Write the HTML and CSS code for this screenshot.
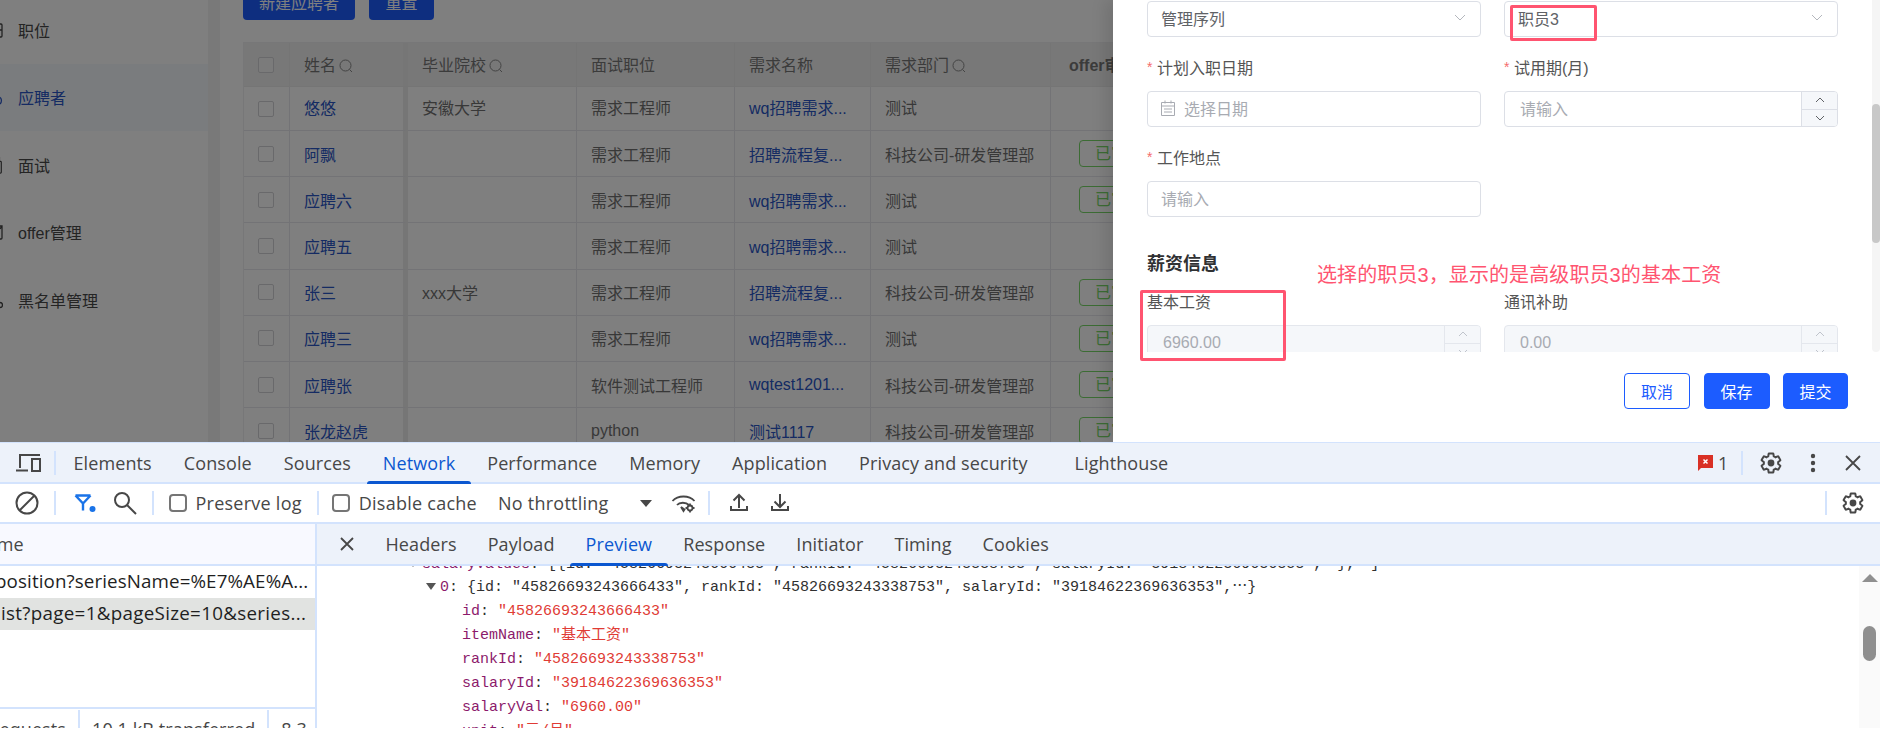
FILE: index.html
```html
<!DOCTYPE html>
<html lang="zh-CN">
<head>
<meta charset="utf-8">
<title>应聘者</title>
<link rel="stylesheet" href="styles.css">
</head>
<body>
<div class="page">
  <div class="app">
    <nav class="sidebar">
      <div class="nav-item"><svg class="nav-ico" viewBox="0 0 16 16"><path d="M8 2h6a1 1 0 0 1 1 1v11a1 1 0 0 1-1 1H8M8 8h7"/></svg>职位</div>
      <div class="nav-item active"><svg class="nav-ico" viewBox="0 0 16 16"><path d="M12 8c3 1 3 5 1 7"/></svg>应聘者</div>
      <div class="nav-item"><svg class="nav-ico" viewBox="0 0 16 20"><path d="M11 6h3a1 1 0 0 1 1 1v11a1 1 0 0 1-1 1H8M13 6V1"/></svg>面试</div>
      <div class="nav-item"><svg class="nav-ico" viewBox="0 0 16 16"><path d="M8 2h7v12a1 1 0 0 1-1 1H8M13 5l2-3"/></svg>offer管理</div>
      <div class="nav-item"><svg class="nav-ico" viewBox="0 0 16 16"><circle cx="13" cy="13" r="2.5"/></svg>黑名单管理</div>
    </nav>
    <div class="gutter"></div>
    <main class="main">
      <div class="actions">
        <button class="btn-top btn-wide">新建应聘者</button>
        <button class="btn-top">重置</button>
      </div>
      <table class="grid">
        <colgroup><col class="c-check"><col class="c-name"><col class="c-school"><col class="c-pos"><col class="c-need"><col class="c-dept"><col class="c-offer"></colgroup>
        <thead>
          <tr>
            <th><span class="cb"></span></th>
            <th class="fixed">姓名<svg class="sico" viewBox="0 0 14 14"><circle cx="6.5" cy="6.5" r="5.5"/><path d="M10.5 10.5l2.5 2.5"/></svg></th>
            <th>毕业院校<svg class="sico" viewBox="0 0 14 14"><circle cx="6.5" cy="6.5" r="5.5"/><path d="M10.5 10.5l2.5 2.5"/></svg></th>
            <th>面试职位</th>
            <th>需求名称</th>
            <th>需求部门<svg class="sico" viewBox="0 0 14 14"><circle cx="6.5" cy="6.5" r="5.5"/><path d="M10.5 10.5l2.5 2.5"/></svg></th>
            <th class="offer-h">offer审批状态</th>
          </tr>
        </thead>
        <tbody>
          <tr class="first"><td><span class="cb"></span></td><td class="fixed link">悠悠</td><td>安徽大学</td><td>需求工程师</td><td class="link">wq招聘需求...</td><td>测试</td><td></td></tr>
          <tr><td><span class="cb"></span></td><td class="fixed link">阿飘</td><td></td><td>需求工程师</td><td class="link">招聘流程复...</td><td>科技公司-研发管理部</td><td><span class="tag">已审批</span></td></tr>
          <tr><td><span class="cb"></span></td><td class="fixed link">应聘六</td><td></td><td>需求工程师</td><td class="link">wq招聘需求...</td><td>测试</td><td><span class="tag">已审批</span></td></tr>
          <tr><td><span class="cb"></span></td><td class="fixed link">应聘五</td><td></td><td>需求工程师</td><td class="link">wq招聘需求...</td><td>测试</td><td></td></tr>
          <tr><td><span class="cb"></span></td><td class="fixed link">张三</td><td>xxx大学</td><td>需求工程师</td><td class="link">招聘流程复...</td><td>科技公司-研发管理部</td><td><span class="tag">已审批</span></td></tr>
          <tr><td><span class="cb"></span></td><td class="fixed link">应聘三</td><td></td><td>需求工程师</td><td class="link">wq招聘需求...</td><td>测试</td><td><span class="tag">已审批</span></td></tr>
          <tr><td><span class="cb"></span></td><td class="fixed link">应聘张</td><td></td><td>软件测试工程师</td><td class="link">wqtest1201...</td><td>科技公司-研发管理部</td><td><span class="tag">已审批</span></td></tr>
          <tr><td><span class="cb"></span></td><td class="fixed link">张龙赵虎</td><td></td><td>python</td><td class="link">测试1117</td><td>科技公司-研发管理部</td><td><span class="tag">已审批</span></td></tr>
        </tbody>
      </table>
    </main>
  </div>
  <div class="mask"></div>
  <aside class="drawer">
    <div class="drawer-body">
      <div class="form-grid">
        <div class="field">
          <div class="input"><span class="val">管理序列</span><svg class="chev" viewBox="0 0 12 8"><path d="M1 1l5 5 5-5"/></svg></div>
        </div>
        <div class="field">
          <div class="input"><span class="val">职员3</span><svg class="chev" viewBox="0 0 12 8"><path d="M1 1l5 5 5-5"/></svg></div>
        </div>
        <div class="field">
          <div class="label"><i class="req">*</i>计划入职日期</div>
          <div class="input"><svg class="cal" viewBox="0 0 14 16"><path d="M.5 2.5h13v13H.5zM.5 6h13M4 .5v3M10 .5v3M3 9h8M3 12h8"/></svg><span class="ph">选择日期</span></div>
        </div>
        <div class="field">
          <div class="label"><i class="req">*</i>试用期(月)</div>
          <div class="input with-step"><span class="ph">请输入</span>
            <div class="stepper"><span class="step"><svg viewBox="0 0 10 6"><path d="M1 5l4-4 4 4"/></svg></span><span class="step"><svg viewBox="0 0 10 6"><path d="M1 1l4 4 4-4"/></svg></span></div>
          </div>
        </div>
        <div class="field">
          <div class="label"><i class="req">*</i>工作地点</div>
          <div class="input"><span class="ph">请输入</span></div>
        </div>
      </div>
      <h3 class="section">薪资信息</h3>
      <div class="form-grid">
        <div class="field">
          <div class="label">基本工资</div>
          <div class="input with-step disabled"><span class="num">6960.00</span>
            <div class="stepper"><span class="step"><svg viewBox="0 0 10 6"><path d="M1 5l4-4 4 4"/></svg></span><span class="step"><svg viewBox="0 0 10 6"><path d="M1 1l4 4 4-4"/></svg></span></div>
          </div>
        </div>
        <div class="field">
          <div class="label">通讯补助</div>
          <div class="input with-step disabled"><span class="num">0.00</span>
            <div class="stepper"><span class="step"><svg viewBox="0 0 10 6"><path d="M1 5l4-4 4 4"/></svg></span><span class="step"><svg viewBox="0 0 10 6"><path d="M1 1l4 4 4-4"/></svg></span></div>
          </div>
        </div>
      </div>
      <div class="d-scroll"><div class="d-thumb"></div></div>
    </div>
    <div class="drawer-foot">
      <button class="btn ghost">取消</button>
      <button class="btn primary">保存</button>
      <button class="btn primary last">提交</button>
    </div>
  </aside>
  <div class="mark mark-rank"></div>
  <div class="mark mark-salary"></div>
  <div class="note">选择的职员3，显示的是高级职员3的基本工资</div>
</div>

<section class="devtools">
  <div class="dt-tabs">
    <svg class="dt-device" viewBox="0 0 26 18"><path d="M5 14V1h20M1 16.500h12"/><rect x="17" y="5" width="8" height="12"/></svg>
    <span class="dt-sep sep-a"></span>
    <div class="tab-list">
      <span class="tab">Elements</span>
      <span class="tab">Console</span>
      <span class="tab">Sources</span>
      <span class="tab on">Network</span>
      <span class="tab">Performance</span>
      <span class="tab">Memory</span>
      <span class="tab">Application</span>
      <span class="tab">Privacy and security</span>
      <span class="tab tab-last">Lighthouse</span>
    </div>
    <div class="dt-right">
      <svg class="err" viewBox="0 0 15 16"><path d="M0 0h15v13H3l-3 3z"/><path class="err-x" d="M5.500 4.500l4 4M9.500 4.500l-4 4"/></svg>
      <span class="err-n">1</span>
      <span class="dt-sep sep-b"></span>
      <svg class="gear gear-a" viewBox="0 0 24 24"><path d="M19.140 12.940c.04-.3.06-.61.06-.94 0-.32-.02-.64-.07-.94l2.030-1.580a.49.49 0 0 0 .12-.61l-1.920-3.320a.488.488 0 0 0-.59-.22l-2.390.96c-.5-.38-1.030-.7-1.620-.94l-.36-2.540a.484.484 0 0 0-.48-.41h-3.840c-.24 0-.43.17-.47.41l-.36 2.540c-.59.24-1.130.57-1.620.94l-2.390-.96c-.22-.08-.47 0-.59.22L2.740 8.870c-.12.21-.08.47.12.61l2.030 1.580c-.05.3-.09.63-.09.94s.02.64.07.94l-2.030 1.580a.49.49 0 0 0-.12.61l1.920 3.320c.12.22.37.29.59.22l2.390-.96c.5.38 1.030.7 1.620.94l.36 2.540c.05.24.24.41.48.41h3.840c.24 0 .44-.17.47-.41l.36-2.540c.59-.24 1.130-.56 1.620-.94l2.390.96c.22.08.47 0 .59-.22l1.920-3.320c.12-.22.07-.47-.12-.61l-2.010-1.580z"/><circle class="gear-dot" cx="12" cy="12" r="3.400"/></svg>
      <svg class="dots" viewBox="0 0 6 20"><circle cx="3" cy="3" r="2.200"/><circle cx="3" cy="10" r="2.200"/><circle cx="3" cy="17" r="2.200"/></svg>
      <svg class="close" viewBox="0 0 16 16"><path d="M1 1l14 14M15 1L1 15"/></svg>
    </div>
  </div>

  <div class="dt-bar">
    <svg class="i-block" viewBox="0 0 24 24"><circle cx="12" cy="12" r="10.500"/><path d="M19.500 4.500l-15 15"/></svg>
    <span class="dt-sep sep-c"></span>
    <svg class="i-filter" viewBox="0 0 22 18"><path d="M1.500 1.500h15M1.500 1.500l7.500 8v7M16.500 1.500l-7.500 8"/><circle class="dot" cx="18.500" cy="15" r="3"/></svg>
    <svg class="i-search" viewBox="0 0 24 24"><circle cx="9" cy="9" r="7"/><path d="M14 14l9 9"/></svg>
    <span class="dt-sep sep-d"></span>
    <label class="chk chk-a"><span class="box"></span>Preserve log</label>
    <span class="dt-sep sep-e"></span>
    <label class="chk chk-b"><span class="box"></span>Disable cache</label>
    <span class="throttle">No throttling</span>
    <svg class="caret" viewBox="0 0 12 7"><path d="M0 0h12L6 7z"/></svg>
    <svg class="i-wifi" viewBox="0 0 25 19"><path d="M1.500 7C7 1 18 1 23.500 7M6 11c2.500-3 9-3 12 0"/><path class="fill" d="M10 13l2.500 4 1-1.500z"/><circle cx="19" cy="14" r="2.500"/><path d="M19 9.500v2M19 16.500v2M14.500 14h2M21.500 14h2"/></svg>
    <span class="dt-sep sep-f"></span>
    <svg class="i-up" viewBox="0 0 18 20"><path d="M1 13v4h16v-4M9 15V2M3.500 7.500L9 2l5.500 5.500"/></svg>
    <svg class="i-down" viewBox="0 0 18 20"><path d="M1 13v4h16v-4M9 1v13M3.500 8.500L9 14l5.500-5.500"/></svg>
    <div class="bar-right">
      <span class="dt-sep"></span>
      <svg class="gear gear-b" viewBox="0 0 24 24"><path d="M19.140 12.940c.04-.3.06-.61.06-.94 0-.32-.02-.64-.07-.94l2.030-1.580a.49.49 0 0 0 .12-.61l-1.920-3.320a.488.488 0 0 0-.59-.22l-2.390.96c-.5-.38-1.030-.7-1.620-.94l-.36-2.540a.484.484 0 0 0-.48-.41h-3.840c-.24 0-.43.17-.47.41l-.36 2.540c-.59.24-1.130.57-1.620.94l-2.390-.96c-.22-.08-.47 0-.59.22L2.740 8.870c-.12.21-.08.47.12.61l2.030 1.580c-.05.3-.09.63-.09.94s.02.64.07.94l-2.030 1.580a.49.49 0 0 0-.12.61l1.920 3.320c.12.22.37.29.59.22l2.390-.96c.5.38 1.030.7 1.620.94l.36 2.540c.05.24.24.41.48.41h3.840c.24 0 .44-.17.47-.41l.36-2.540c.59-.24 1.130-.56 1.620-.94l2.390.96c.22.08.47 0 .59-.22l1.920-3.320c.12-.22.07-.47-.12-.61l-2.010-1.580z"/><circle class="gear-dot" cx="12" cy="12" r="3.400"/></svg>
    </div>
  </div>

  <div class="dt-split">
    <div class="req-pane">
      <div class="req-head"><span class="req-name">Name</span></div>
      <div class="req-list">
        <div class="req-row"><span class="req-a">position?seriesName=%E7%AE%A...</span></div>
        <div class="req-row sel"><span class="req-b">list?page=1&amp;pageSize=10&amp;series...</span></div>
      </div>
      <div class="status">
        <span class="st st-a">requests</span>
        <span class="st-sep"></span>
        <span class="st st-b">10.1 kB transferred</span>
        <span class="st-sep"></span>
        <span class="st st-c">8.3</span>
      </div>
    </div>
    <div class="detail">
      <div class="det-tabs">
        <svg class="det-x" viewBox="0 0 14 14"><path d="M1 1l12 12M13 1L1 13"/></svg>
        <span class="dtab">Headers</span>
        <span class="dtab">Payload</span>
        <span class="dtab on">Preview</span>
        <span class="dtab">Response</span>
        <span class="dtab">Initiator</span>
        <span class="dtab">Timing</span>
        <span class="dtab">Cookies</span>
      </div>
      <div class="det-body">
        <div class="json">
          <div class="jl l0"><i class="tri"></i><span class="k">salaryValues</span>: [{id: "45826693243666433", rankId: "45826693243338753", salaryId: "39184622369636353",<span class="more">…</span>},<span class="more">…</span>]</div>
          <div class="jl l1"><i class="tri"></i><span class="k">0</span>: {id: "45826693243666433", rankId: "45826693243338753", salaryId: "39184622369636353",<span class="more">…</span>}</div>
          <div class="jl l2"><span class="k">id</span>: <span class="s">"45826693243666433"</span></div>
          <div class="jl l2"><span class="k">itemName</span>: <span class="s">"基本工资"</span></div>
          <div class="jl l2"><span class="k">rankId</span>: <span class="s">"45826693243338753"</span></div>
          <div class="jl l2"><span class="k">salaryId</span>: <span class="s">"39184622369636353"</span></div>
          <div class="jl l2"><span class="k">salaryVal</span>: <span class="s">"6960.00"</span></div>
          <div class="jl l2"><span class="k">unit</span>: <span class="s">"元/月"</span></div>
        </div>
        <div class="dt-scroll"><i class="up"></i><i class="thumb"></i></div>
      </div>
    </div>
  </div>
</section>
</body>
</html>
```

FILE: styles.css
```css
* { box-sizing: border-box; }
html, body { margin: 0; padding: 0; height: 729px; overflow: hidden; background: #fff; }
body { font-family: "Liberation Sans", "Noto Sans CJK SC", sans-serif; font-size: 16px; color: #333; }
svg { display: block; flex: none; fill: none; }

/* application */
.page { position: relative; height: 442px; overflow: hidden; }
.app { display: flex; height: 442px; }
.sidebar { width: 208px; flex: none; margin-top: -4px; overflow: hidden; background: #fff; }
.nav-item { height: 67.5px; display: flex; align-items: center; color: #484848; }
.nav-item.active { background: #f4f8fd; color: #2a56c6; }
.nav-ico { width: 16px; height: 18px; margin: 0 15px 0 -13px; stroke: #444; stroke-width: 1.3; }
.active .nav-ico { stroke: #2a56c6; }
.gutter { width: 12px; flex: none; background: #f3f3f3; }
.main { flex: 1; min-width: 0; padding-left: 23px; overflow: hidden; background: #fff; }
.actions { display: flex; gap: 14px; height: 36px; margin-top: -16px; }
.btn-top { height: 36px; width: 65px; border: 0; border-radius: 4px; padding: 0; background: #1c5cff; color: #fff; font: inherit; }
.btn-wide { width: 112px; }

.grid { margin-top: 22px; width: 935px; border-collapse: separate; border-spacing: 0; table-layout: fixed; border-top: 1px solid #eeeef0; border-left: 1px solid #eeeef0; }
.c-check { width: 46px; } .c-name { width: 118px; } .c-school { width: 169px; } .c-pos { width: 158px; }
.c-need { width: 136px; } .c-dept { width: 180px; } .c-offer { width: 128px; }
.grid th, .grid td { padding: 0 14px; text-align: left; white-space: nowrap; overflow: hidden; border-right: 1px solid #e6e6ec; border-bottom: 1px solid #e6e6ec; height: 46.2px; font-size: 16px; }
.grid th { height: 44px; padding-bottom: 2px; background: #f0f0f0; color: #777; font-weight: 400; border-color: #eaeaea; }
.grid th:first-child, .grid td:first-child { padding: 0 0 0 14px; }
.grid td { color: #717171; }
.grid .first td { height: 44px; padding-bottom: 3px; }
.grid .first td:first-child { padding-bottom: 0; }
.grid .fixed { border-right: 5px solid #ececec; }
.grid td.link { color: #2a56c6; }
.grid .offer-h { font-weight: 700; padding-left: 18px; overflow: visible; }
.cb { display: block; width: 16px; height: 16px; border: 1px solid #d2d2d6; border-radius: 2px; background: #fff; }
th .cb { background: #f6f6f6; }
.sico { display: inline-block; vertical-align: -2px; width: 14px; height: 14px; margin-left: 3px; stroke: #888; stroke-width: 1; }
.tag { display: inline-block; margin-left: 14px; padding: 0 15px; height: 27px; line-height: 25px; border: 1px solid #78d868; border-radius: 4px; color: #78d868; }

.mask { position: absolute; inset: 0; background: rgba(0, 0, 0, .5); }

/* drawer */
.drawer { position: absolute; top: 0; right: 0; bottom: 0; width: 767px; background: #fff; box-shadow: -8px 0 14px rgba(0, 0, 0, .1); }
.drawer-body { position: relative; height: 352px; padding: 1px 42px 0 34px; overflow: hidden; }
.form-grid { display: grid; grid-template-columns: 334px 334px; column-gap: 23px; row-gap: 20px; }
.field { min-width: 0; }
.label { height: 24px; line-height: 24px; margin-bottom: 10px; color: #555; white-space: nowrap; }
.req { display: inline-block; width: 10px; font-style: normal; font-size: 14px; color: #f56c6c; vertical-align: 2px; line-height: 14px; }
.input { display: flex; align-items: center; height: 36px; padding: 0 0 2px 13px; border: 1px solid #dcdfe6; border-radius: 4px; background: #fff; overflow: hidden; }
.with-step { padding-left: 15px; padding-bottom: 0; }
.with-step .ph { padding-bottom: 2px; }
.val { color: #606266; }
.ph { color: #a8abb2; }
.num { color: #a8abb2; }
.chev { width: 12px; height: 8px; margin-left: auto; margin-right: 14px; stroke: #b4b7bd; stroke-width: 1; }
.cal { width: 14px; height: 16px; margin-right: 9px; stroke: #a8abb2; stroke-width: 1; }
.stepper { display: flex; flex-direction: column; width: 36px; height: 100%; margin-left: auto; border-left: 1px solid #dcdfe6; background: #f5f7fa; }
.step { flex: 1; display: flex; align-items: center; justify-content: center; }
.step + .step { border-top: 1px solid #dcdfe6; }
.step svg { width: 10px; height: 6px; stroke: #606266; stroke-width: 1; }
.input.disabled { background: #f5f7fa; border-color: #e4e7ed; }
.disabled .step svg { stroke: #c0c4cc; }
.disabled .stepper, .disabled .step + .step { border-color: #e4e7ed; }
.section { margin: 35px 0 15px; height: 24px; line-height: 24px; font-size: 18px; font-weight: 700; color: #303133; }
.d-scroll { position: absolute; top: 0; right: 0; bottom: 0; width: 8px; background: #f5f5f5; border-radius: 0 0 4px 4px; }
.d-thumb { margin-top: 104px; height: 139px; border-radius: 4px; background: #c8c8c8; }
.drawer-foot { display: flex; justify-content: flex-end; gap: 13.5px; padding: 21px 32px 0 0; }
.btn { width: 66px; height: 36px; padding: 0; border-radius: 4px; font: inherit; border: 1px solid #1c5cff; }
.btn.last { width: 65px; }
.ghost { background: #fff; color: #1c5cff; }
.primary { background: #1c5cff; color: #fff; }

/* annotations drawn over the capture */
.mark { position: absolute; border: 3px solid #ff5470; border-radius: 2px; }
.mark-rank { left: 1510px; top: 5px; width: 87px; height: 36px; }
.mark-salary { left: 1140px; top: 290px; width: 146px; height: 71px; }
.note { position: absolute; left: 1317px; top: 262px; line-height: 26px; font-size: 20px; letter-spacing: .1px; color: #ff5470; white-space: nowrap; }

/* devtools */
.devtools { height: 287px; border-top: 1px solid #d3e3fd; font-family: "Open Sans", "Noto Sans CJK SC", sans-serif; font-size: 18px; letter-spacing: .1px; color: #474747; overflow: hidden; background: #fff; }
.dt-sep { display: block; flex: none; width: 2px; height: 24px; background: #d3e3fd; }
.dt-tabs { display: flex; align-items: center; height: 41px; background: #edf2fa; border-bottom: 2px solid #d3e3fd; }
.dt-device { width: 26px; height: 18px; margin-left: 15px; stroke: #474747; stroke-width: 2; }
.sep-a { margin-left: 13px; }
.tab-list { display: flex; align-self: stretch; margin-left: 1.500px; }
.tab { position: relative; display: flex; align-items: center; padding: 0 16px; white-space: nowrap; }
.tab.on { color: #0b57d0; }
.tab.on::after { content: ""; position: absolute; left: 0; right: 0; bottom: -2px; height: 3px; background: #0b57d0; border-radius: 3px 3px 0 0; }
.tab-last { margin-left: 15px; }
.dt-right { display: flex; align-items: center; margin-left: auto; }
.err { width: 15px; height: 16px; fill: #d93025; }
.err-x { stroke: #fff; stroke-width: 1.5; }
.err-n { margin-left: 5px; width: 12px; }
.sep-b { margin-left: 11px; }
.gear { width: 24px; height: 24px; stroke: #474747; stroke-width: 2; }
.gear-dot { fill: #474747; stroke: none; }
.gear-a { margin-left: 16px; }
.dots { width: 6px; height: 20px; margin-left: 27px; fill: #474747; }
.close { width: 16px; height: 16px; margin: 0 19px 0 29px; stroke: #474747; stroke-width: 1.800; }

.dt-bar { display: flex; align-items: center; height: 40px; border-bottom: 2px solid #d3e3fd; background: #fff; }
.dt-bar svg { stroke: #474747; stroke-width: 2; }
.i-block { width: 24px; height: 24px; margin-left: 15px; }
.sep-c { margin-left: 15px; }
.i-filter { width: 22px; height: 18px; margin-left: 18px; }
.dt-bar .i-filter { stroke: #1a73e8; stroke-width: 2.400; }
.dot { fill: #1a73e8; stroke: none; }
.i-search { width: 24px; height: 24px; margin-left: 17px; }
.sep-d { margin-left: 15px; }
.chk { display: flex; align-items: center; white-space: nowrap; letter-spacing: .25px; }
.box { display: block; width: 18px; height: 18px; margin-right: 9px; border: 2px solid #757575; border-radius: 4px; }
.chk-a { margin-left: 14.500px; }
.sep-e { margin-left: 15px; }
.chk-b { margin-left: 13px; }
.throttle { margin-left: 21px; white-space: nowrap; letter-spacing: .25px; }
.dt-bar .caret { width: 12px; height: 7px; margin-left: 31.500px; fill: #474747; stroke: none; }
.i-wifi { width: 25px; height: 19px; margin-left: 19px; }
.dt-bar .i-wifi { stroke-width: 1.800; }
.fill { fill: #474747; }
.sep-f { margin-left: 12px; }
.i-up { width: 18px; height: 20px; margin-left: 20px; }
.i-down { width: 18px; height: 20px; margin-left: 23px; }
.bar-right { display: flex; align-items: center; margin-left: auto; }
.gear-b { margin: 0 15px 0 14px; }

.dt-split { display: flex; height: 204px; }
.req-pane { position: relative; width: 317px; flex: none; border-right: 2px solid #d3e3fd; overflow: hidden; }
.req-head { height: 42px; line-height: 40px; background: #f8f9ff; border-bottom: 2px solid #d3e3fd; white-space: nowrap; }
.req-name { display: block; margin-left: -27px; }
.req-list { height: 143px; border-bottom: 2px solid #d3e3fd; }
.req-row { height: 32px; line-height: 30px; font-size: 18.800px; white-space: nowrap; color: #1f1f1f; }
.req-row.sel { background: #e1e3e1; }
.req-a { display: block; margin-left: -5px; }
.req-b { display: block; margin-left: -4px; letter-spacing: .3px; }
.status { display: flex; align-items: flex-start; white-space: nowrap; }
.st { line-height: 40px; }
.st-a { margin-left: -8px; }
.st-sep { flex: none; width: 2px; height: 20px; margin: 1px 12px 0; background: #d3e3fd; }

.detail { flex: 1; min-width: 0; display: flex; flex-direction: column; }
.det-tabs { position: relative; z-index: 1; display: flex; align-items: center; flex: none; height: 42px; background: #edf2fa; border-bottom: 2px solid #d3e3fd; }
.det-x { width: 14px; height: 14px; margin: 0 16px 0 23px; stroke: #474747; stroke-width: 1.800; }
.dtab { position: relative; display: flex; align-items: center; align-self: stretch; padding: 0 15.500px; white-space: nowrap; }
.dtab.on { color: #0b57d0; }
.dtab.on::after { content: ""; position: absolute; left: 0; right: 0; bottom: -2px; height: 3px; background: #0b57d0; border-radius: 3px 3px 0 0; }
.det-body { flex: 1; display: flex; min-height: 0; overflow: hidden; }
.json { flex: 1; min-width: 0; margin-top: -13.500px; font-family: "Liberation Mono", "Noto Sans CJK SC", monospace; font-size: 15px; line-height: 24px; letter-spacing: 0; color: #303030; white-space: nowrap; }
.jl { position: relative; height: 23.900px; }
.l0 { padding-left: 106px; }
.l1 { padding-left: 124px; }
.l2 { padding-left: 145px; }
.tri { display: inline-block; width: 0; height: 0; margin: 0 4px 1px -15px; border: 5px solid transparent; border-top: 7px solid #555; border-bottom: 0; }
.more { font-family: "Noto Sans CJK SC", sans-serif; line-height: 1; }
.k { color: #8c1a6b; }
.s { color: #e03b35; }
.dt-scroll { flex: none; width: 21px; background: #fafafa; display: flex; flex-direction: column; align-items: center; }
.up { display: block; margin-top: 8px; width: 0; height: 0; border: 8px solid transparent; border-bottom: 8px solid #8f8f8f; border-top: 0; }
.thumb { display: block; margin-top: 44px; width: 13px; height: 35px; border-radius: 7px; background: #8f8f8f; }
```
